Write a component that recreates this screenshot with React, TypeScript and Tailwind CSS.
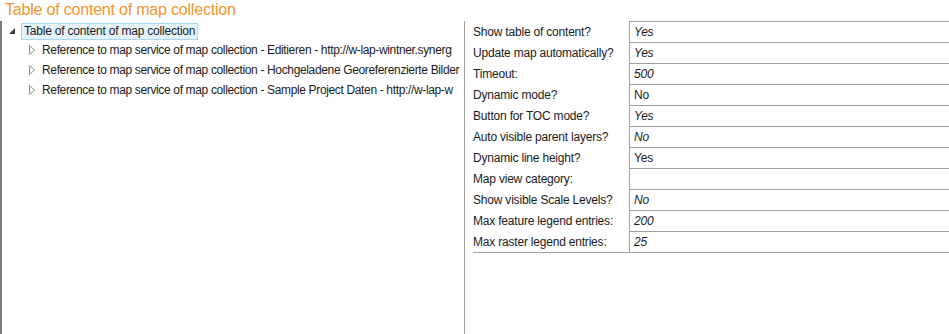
const rows: { label: string; value: string; italic: boolean }[] = [
    { label: 'Show table of content?', value: 'Yes', italic: true },
    { label: 'Update map automatically?', value: 'Yes', italic: true },
    { label: 'Timeout:', value: '500', italic: true },
    { label: 'Dynamic mode?', value: 'No', italic: false },
    { label: 'Button for TOC mode?', value: 'Yes', italic: true },
    { label: 'Auto visible parent layers?', value: 'No', italic: true },
    { label: 'Dynamic line height?', value: 'Yes', italic: false },
    { label: 'Map view category:', value: '', italic: false },
    { label: 'Show visible Scale Levels?', value: 'No', italic: true },
    { label: 'Max feature legend entries:', value: '200', italic: true },
    { label: 'Max raster legend entries:', value: '25', italic: true },
];

// texts are clipped by the panel edge in the original, keep what is visible
const children = [
    'Reference to map service of map collection - Editieren - http://w-lap-wintner.synerg',
    'Reference to map service of map collection - Hochgeladene Georeferenzierte Bilder',
    'Reference to map service of map collection - Sample Project Daten - http://w-lap-w',
];

const App = () => {
    return (
        <div className="w-[949px] h-[334px] bg-white overflow-hidden flex flex-col font-['Liberation_Sans',Arial,sans-serif] text-[#1b1b1b]">
            <div className="h-[21px] pl-[5px] text-[16px] leading-[20px] tracking-[-0.2px] text-[#f0952c] whitespace-nowrap">
                Table of content of map collection
            </div>
            <div className="flex flex-1 min-h-0 border-l-2 border-[#7a7a7a]">
                {/* tree */}
                <div className="w-[462px] overflow-hidden text-[12px] whitespace-nowrap">
                    <div className="h-[19px] pt-[1px] flex items-center tracking-[-0.2px]">
                        <svg width="6" height="6" viewBox="0 0 6 6" className="shrink-0 ml-[7px] mr-[6px]">
                            <polygon points="6,0 6,6 0,6" fill="#3c3c3c" />
                        </svg>
                        <div className="h-[17px] px-[2px] flex items-center bg-[#e5f3fb] border border-[#a6d7f3]">
                            Table of content of map collection
                        </div>
                    </div>
                    {children.map((c, i) => (
                        <div key={i} className="h-[20px] flex items-center tracking-[-0.35px]">
                            <svg width="6" height="10" viewBox="0 0 6 10" className="shrink-0 ml-[27px] mr-[7px]">
                                <polygon points="0.5,0.5 5.5,5 0.5,9.5" fill="none" stroke="#8c8c8c" strokeWidth="1" />
                            </svg>
                            <span>{c}</span>
                        </div>
                    ))}
                </div>
                {/* properties */}
                <div className="flex-1 border-l border-[#a0a0a0] pl-[8px] text-[12px] tracking-[-0.2px] whitespace-nowrap">
                    <div className="border-b border-[#a0a0a0]">
                        {rows.map((r, i) => (
                            <div key={i} className="flex h-[21px]">
                                <div className="w-[156px] flex items-center">{r.label}</div>
                                <div
                                    className={
                                        'flex-1 flex items-center pl-[4px] border-l border-t border-[#a0a0a0] ' +
                                        (r.italic ? 'italic' : '')
                                    }
                                >
                                    {r.value}
                                </div>
                            </div>
                        ))}
                    </div>
                </div>
            </div>
        </div>
    );
};

export default App;
